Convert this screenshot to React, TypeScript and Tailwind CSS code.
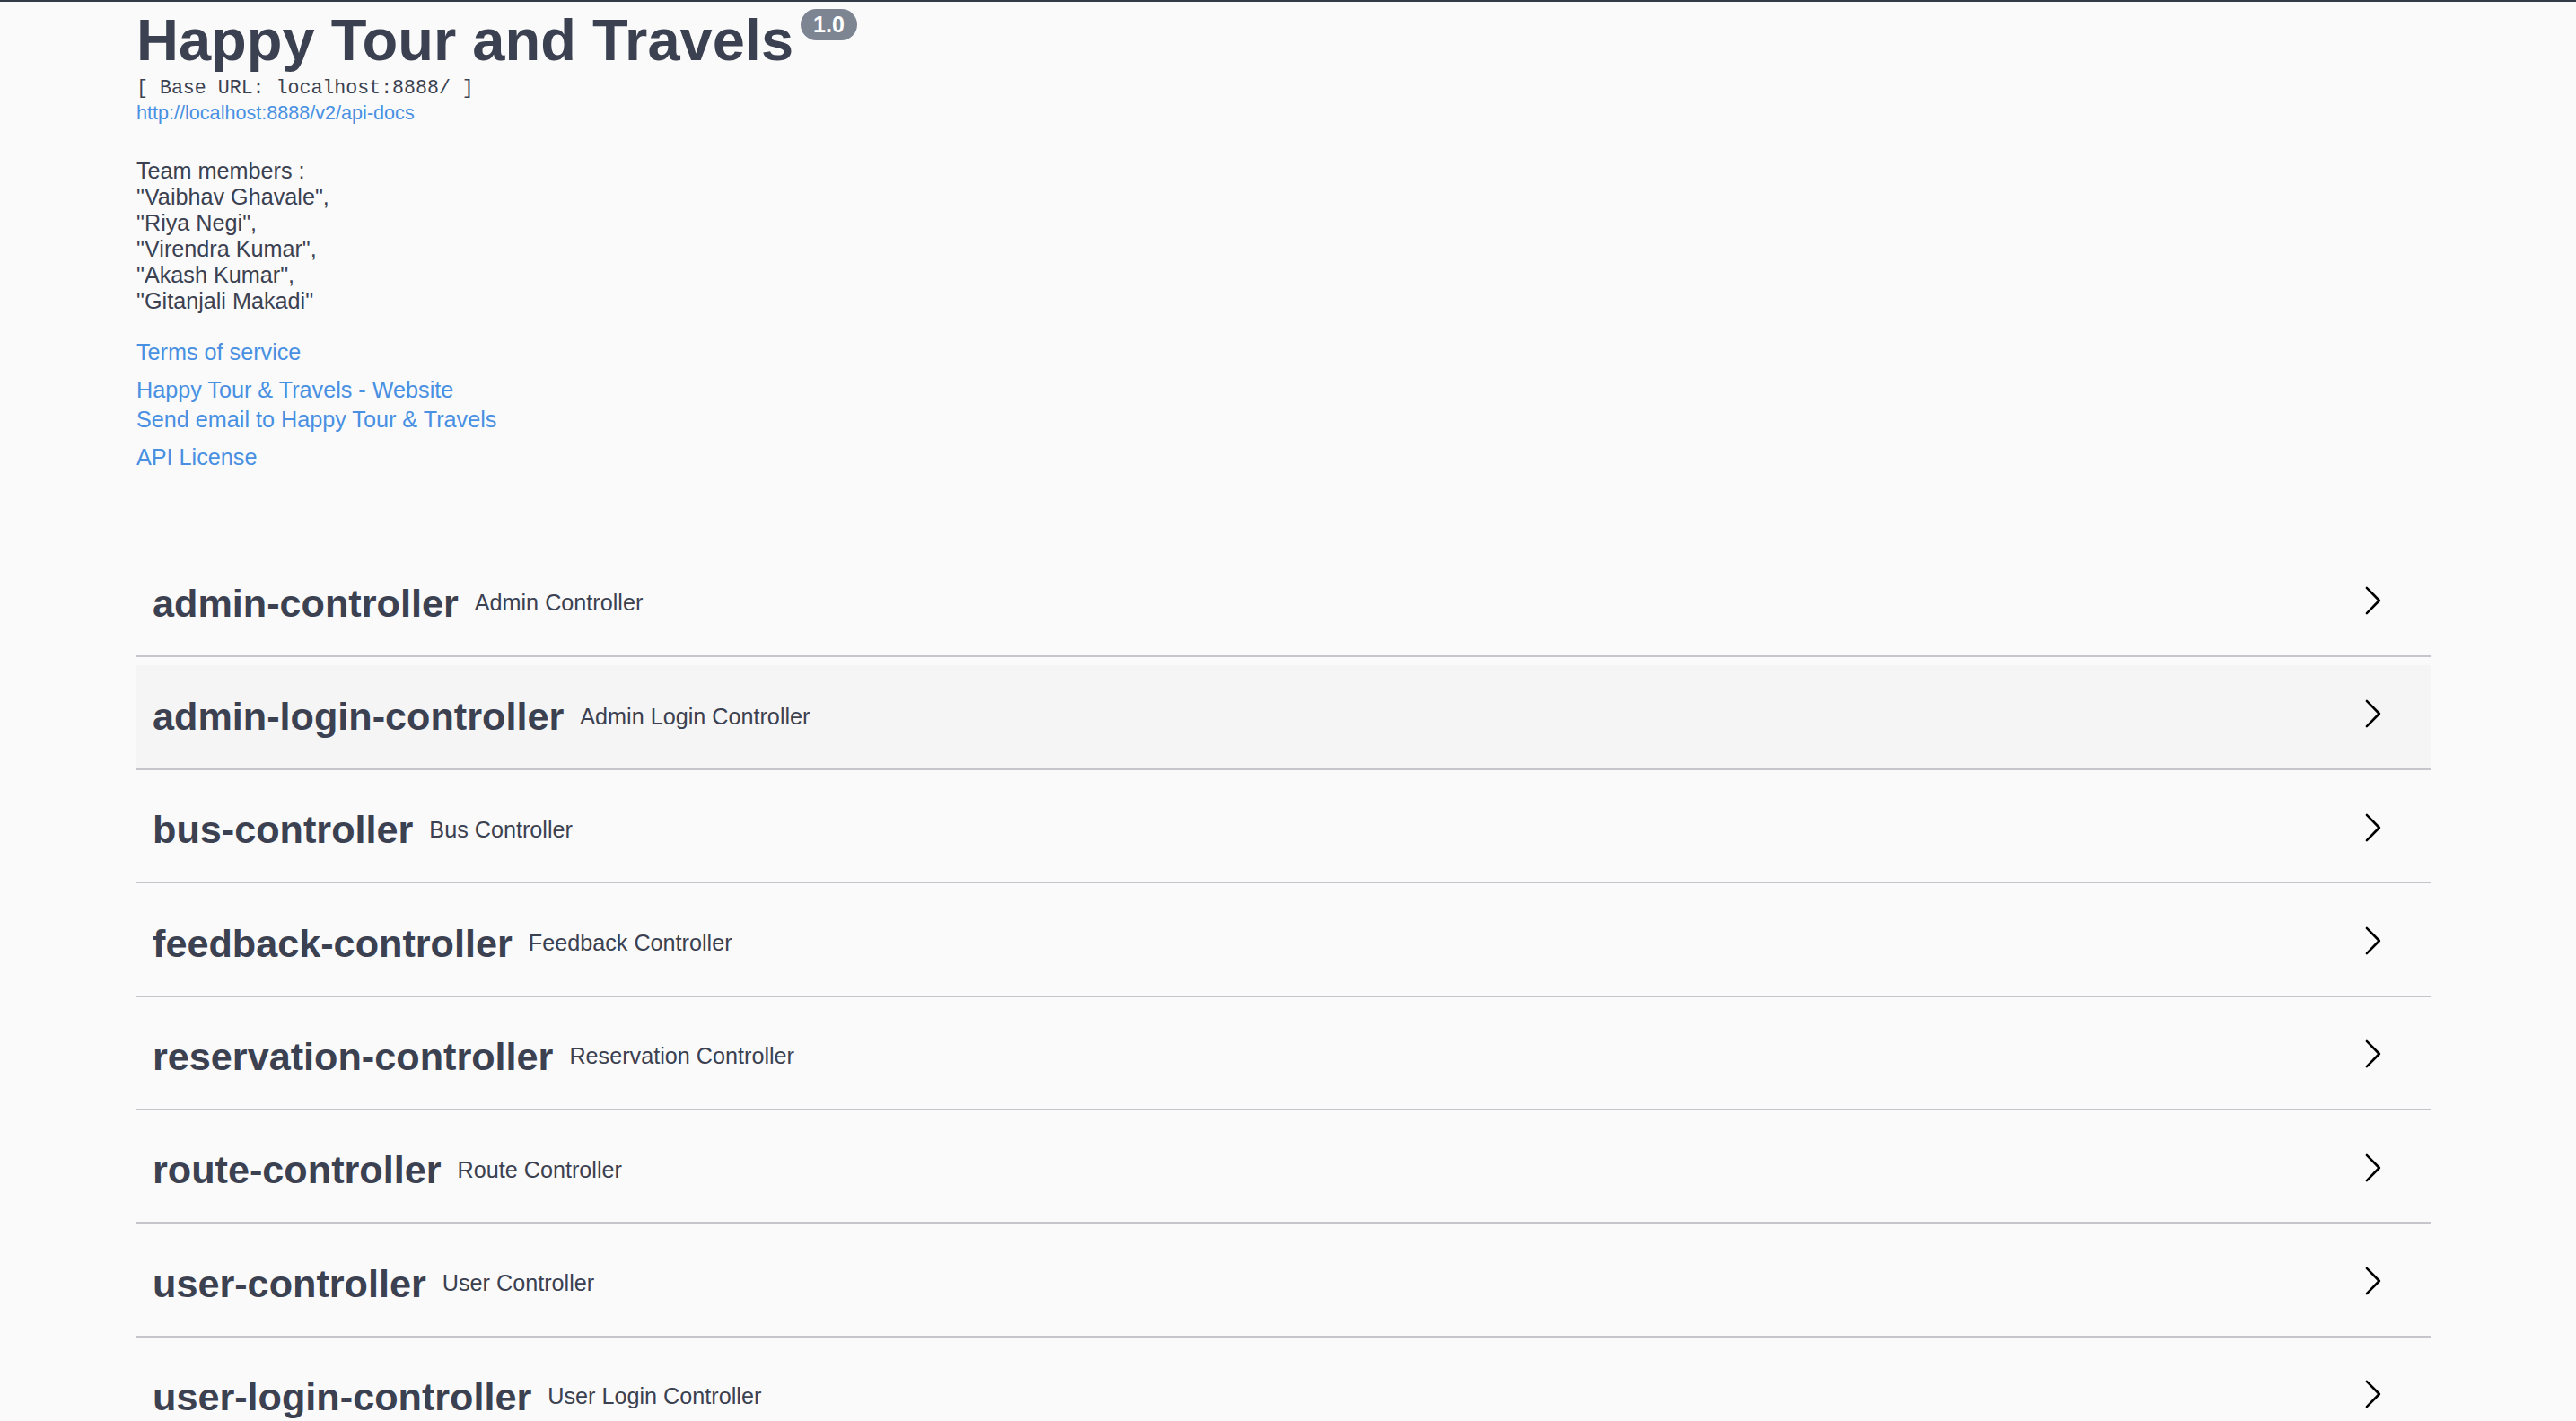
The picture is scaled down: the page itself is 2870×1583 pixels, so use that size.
import React from "react";

const tags: { name: string; desc: string; hover?: boolean }[] = [
  { name: "admin-controller", desc: "Admin Controller" },
  { name: "admin-login-controller", desc: "Admin Login Controller", hover: true },
  { name: "bus-controller", desc: "Bus Controller" },
  { name: "feedback-controller", desc: "Feedback Controller" },
  { name: "reservation-controller", desc: "Reservation Controller" },
  { name: "route-controller", desc: "Route Controller" },
  { name: "user-controller", desc: "User Controller" },
  { name: "user-login-controller", desc: "User Login Controller" },
];

const members = [
  "Team members :",
  '"Vaibhav Ghavale",',
  '"Riya Negi",',
  '"Virendra Kumar",',
  '"Akash Kumar",',
  '"Gitanjali Makadi"',
];

function Arrow() {
  return (
    <svg width="36" height="36" viewBox="0 0 20 20" aria-hidden="true">
      <path
        fill="#000"
        d="M13.25 10L6.109 2.58a.697.697 0 0 1 0-.979.68.68 0 0 1 .969 0l7.83 7.908a.697.697 0 0 1 0 .979l-7.83 7.909a.68.68 0 0 1-.969 0 .697.697 0 0 1 0-.979L13.25 10z"
      />
    </svg>
  );
}

export default function App() {
  return (
    <div
      className="min-h-screen bg-[#fafafa] text-[#3b4151]"
      style={{ fontFamily: '"Liberation Sans", Arial, sans-serif' }}
    >
      <div className="h-[2px] bg-[#343a46]" />
      <div className="w-[2556px] ml-[152px]">
        {/* Info */}
        <div className="pt-[5.5px]">
          <div className="flex items-start">
            <h2 className="text-[65px] leading-[74px] font-bold text-[#3b4151] m-0">
              Happy Tour and Travels
            </h2>
            <span className="ml-[8px] mt-[2.5px] h-[35px] px-[14px] rounded-full bg-[#7d8492] text-white font-bold text-[25px] leading-[35px]">
              1.0
            </span>
          </div>
          <pre
            className="mt-[4px] text-[21.6px] leading-[25px] text-[#3b4151] m-0"
            style={{ fontFamily: '"Liberation Mono", "Courier New", monospace' }}
          >
            [ Base URL: localhost:8888/ ]
          </pre>
          <div className="mt-[2.5px] text-[21.6px] leading-[25px]">
            <a className="text-[#4990e2]">http://localhost:8888/v2/api-docs</a>
          </div>
          <div className="mt-[37.5px] text-[25.2px] leading-[29px]">
            {members.map((m) => (
              <div key={m}>{m}</div>
            ))}
          </div>
          <div className="mt-[28.5px] text-[25.2px] leading-[29px] text-[#4990e2]">
            <a>Terms of service</a>
          </div>
          <div className="mt-[13px] text-[25.2px] leading-[29px] text-[#4990e2]">
            <div>
              <a>Happy Tour &amp; Travels - Website</a>
            </div>
            <div className="mt-[4px]">
              <a>Send email to Happy Tour &amp; Travels</a>
            </div>
          </div>
          <div className="mt-[13px] text-[25.2px] leading-[29px] text-[#4990e2]">
            <a>API License</a>
          </div>
        </div>

        {/* Tags */}
        <div className="mt-[90.5px]">
          {tags.map((t) => (
            <div
              key={t.name}
              className={
                "flex items-center h-[117.3px] mb-[9px] border-b-2 border-[#c4c6cb] pl-[18px] pr-[36px] " +
                (t.hover ? "bg-[#f5f5f5]" : "")
              }
            >
              <span className="text-[43.2px] font-bold text-[#3b4151] whitespace-nowrap">
                {t.name}
              </span>
              <span className="flex-1 px-[18px] text-[25.2px] text-[#3b4151]">
                {t.desc}
              </span>
              <button className="px-[10.8px] mb-[6px] flex items-center bg-transparent border-0">
                <Arrow />
              </button>
            </div>
          ))}
        </div>
      </div>
    </div>
  );
}
